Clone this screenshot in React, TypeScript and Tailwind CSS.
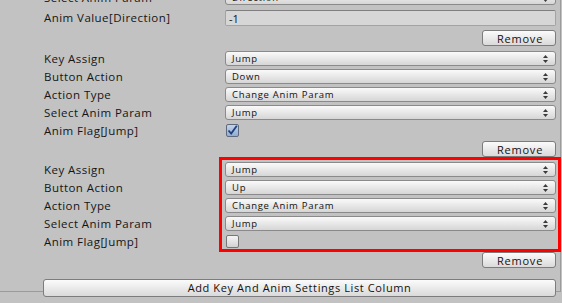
import React from "react";

const Arrows = () => (
  <svg className="absolute right-[7px] top-1/2 -translate-y-1/2" width="5" height="8" viewBox="0 0 5 8">
    <path d="M2.5 0 L5 3 L0 3 Z" fill="#3a3a3a" />
    <path d="M0 5 L5 5 L2.5 8 Z" fill="#3a3a3a" />
  </svg>
);

const Popup = ({ value }: { value: string }) => (
  <div className="relative flex h-[15px] w-full items-center rounded-[3px] border border-[#8a8a8a] bg-gradient-to-b from-[#fafafa] to-[#d6d6d6] pl-[6px] text-[9.5px] leading-none tracking-[0.7px] text-[#111]">
    <span>{value}</span>
    <Arrows />
  </div>
);

const TextField = ({ value }: { value: string }) => (
  <div className="flex h-[16px] w-full items-center rounded-[2px] border border-[#a3a3a3] border-t-[#7f7f7f] bg-[#d6d6d6] pl-[3px] text-[11px] leading-none text-[#111]">
    {value}
  </div>
);

const CheckBox = ({ checked }: { checked?: boolean }) => (
  <div
    className={
      checked
        ? "ml-[1px] mt-[1px] flex h-[13px] w-[13px] items-center justify-center rounded-[2px] border border-[#5d6a7d] bg-gradient-to-b from-[#c3d3ea] to-[#93acd0]"
        : "ml-[1px] mt-[1px] h-[13px] w-[13px] rounded-[2px] border border-[#777] bg-gradient-to-b from-[#f5f5f5] to-[#d2d2d2]"
    }
  >
    {checked && (
      <svg width="11" height="11" viewBox="0 0 11 11">
        <path d="M1.5 5.5 L4.2 8.5 L9.8 0.8" stroke="#1d3f7a" strokeWidth="1.8" fill="none" />
      </svg>
    )}
  </div>
);

const Row = ({
  label,
  h = "h-[18px]",
  children,
}: {
  label: string;
  h?: string;
  children: React.ReactNode;
}) => (
  <div className={`grid grid-cols-[181px_331px] ${h}`}>
    <div className="flex h-[15px] items-center text-[11.5px] leading-none tracking-[0.45px] text-[#151515]">{label}</div>
    <div>{children}</div>
  </div>
);

const RemoveRow = ({ h = "h-[21px]" }: { h?: string }) => (
  <div className={`flex justify-end ${h}`}>
    <button className="h-[16px] w-[74px] rounded-[3px] border border-[#7c7c7c] bg-gradient-to-b from-[#fbfbfb] to-[#dadada] pl-[2px] text-[11px] leading-none tracking-[0.8px] text-[#111]">
      Remove
    </button>
  </div>
);

const Section = ({ action, checked }: { action: string; checked?: boolean }) => (
  <div>
    <Row label="Key Assign">
      <Popup value="Jump" />
    </Row>
    <Row label="Button Action">
      <Popup value={action} />
    </Row>
    <Row label="Action Type">
      <Popup value="Change Anim Param" />
    </Row>
    <Row label="Select Anim Param">
      <Popup value="Jump" />
    </Row>
    <Row label="Anim Flag[Jump]">
      <CheckBox checked={checked} />
    </Row>
  </div>
);

export default function App() {
  return (
    <div className="relative h-[303px] w-[562px] overflow-hidden bg-[#c2c2c2] font-['Open_Sans',sans-serif]">
      <div className="h-[302px] w-[561px] border-b border-r border-[#9b9b9b] pl-[44px]">
        <div className="-mt-[10px] w-[512px]">
          <Row label="Select Anim Param" h="h-[20px]">
            <Popup value="Direction" />
          </Row>
          <Row label="Anim Value[Direction]" h="h-[20px]">
            <TextField value="-1" />
          </Row>
          <RemoveRow />
          <Section action="Down" checked />
          <RemoveRow />
          <Section action="Up" />
          <RemoveRow h="h-[22px]" />
          <button className="-ml-[1px] h-[18px] w-[513px] rounded-[3px] border border-[#7c7c7c] bg-gradient-to-b from-[#fbfbfb] to-[#dadada] text-[11px] leading-none tracking-[0.6px] text-[#111]">
            Add Key And Anim Settings List Column
          </button>
        </div>
      </div>
      <div className="pointer-events-none absolute left-[219px] top-[157px] h-[95px] w-[342px] border-[3px] border-[#ff0000]" />
    </div>
  );
}
